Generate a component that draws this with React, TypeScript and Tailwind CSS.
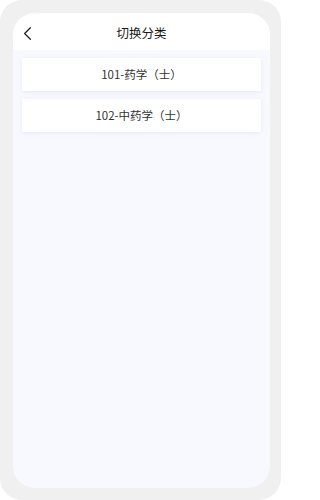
import { ChevronLeft } from 'lucide-react'

const categories = ['101-药学（士）', '102-中药学（士）']

export default function App() {
  return (
    <div
      className="w-[281px] h-[500px] bg-white"
      style={{ fontFamily: '"Noto Sans CJK SC", "Noto Sans", sans-serif' }}
    >
      <div className="w-full h-full rounded-[22px] bg-[#f0f0f0] pt-[13px] pb-[12px] pl-[13px] pr-[11px]">
        <div className="w-full h-full rounded-[22px] bg-[#f8f9fe] overflow-hidden flex flex-col">
          <div className="h-[37px] bg-white relative flex items-center justify-center shrink-0 pt-[3px]">
            <ChevronLeft className="absolute left-[3px] top-[9px] h-[23px] w-[23px] text-[#222]" strokeWidth={1.3} />
            <span className="text-[12.5px] text-[#1a1a1a] font-normal">切换分类</span>
          </div>
          <div className="flex flex-col gap-[8px] px-[9px] pt-[8px]">
            {categories.map((c) => (
              <div
                key={c}
                className="h-[33px] bg-white flex items-center justify-center text-[11.5px] text-[#333] shadow-[0_1px_4px_rgba(180,200,240,0.3)]"
              >
                {c}
              </div>
            ))}
          </div>
        </div>
      </div>
    </div>
  )
}
